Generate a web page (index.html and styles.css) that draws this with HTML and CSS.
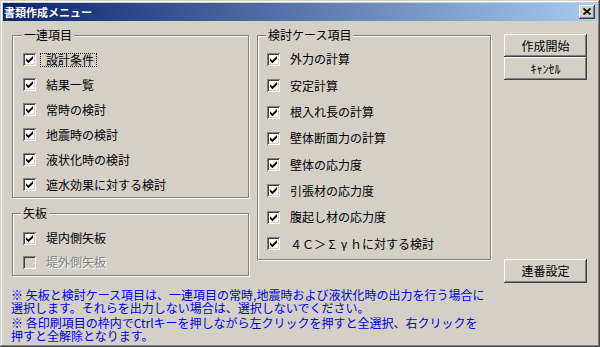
FILE: index.html
```html
<!DOCTYPE html>
<html lang="ja">
<head>
<meta charset="utf-8">
<title>書類作成メニュー</title>
<link rel="stylesheet" href="styles.css">
</head>
<body>
<div class="window">
  <div class="titlebar">
    <span class="title">書類作成メニュー</span>
    <span class="close"><svg width="8" height="7" viewBox="0 0 8 7"><path d="M0.5 0.5L7.5 6.5M7.5 0.5L0.5 6.5" stroke="#000" stroke-width="1.7" fill="none"/></svg></span>
  </div>
  <div class="client">
    <div class="main">
      <div class="col-left">
        <div class="group g1">
          <div class="group-title">一連項目</div>
          <div class="rows">
            <div class="row"><span class="cb"><svg viewBox="0 0 9 9"><path d="M1 3.2L3.4 5.4L8 1L8 3.8L3.4 8.2L1 5.8Z"/></svg></span><span class="lbl focus">設計条件</span></div>
            <div class="row"><span class="cb"><svg viewBox="0 0 9 9"><path d="M1 3.2L3.4 5.4L8 1L8 3.8L3.4 8.2L1 5.8Z"/></svg></span><span class="lbl">結果一覧</span></div>
            <div class="row"><span class="cb"><svg viewBox="0 0 9 9"><path d="M1 3.2L3.4 5.4L8 1L8 3.8L3.4 8.2L1 5.8Z"/></svg></span><span class="lbl">常時の検討</span></div>
            <div class="row"><span class="cb"><svg viewBox="0 0 9 9"><path d="M1 3.2L3.4 5.4L8 1L8 3.8L3.4 8.2L1 5.8Z"/></svg></span><span class="lbl">地震時の検討</span></div>
            <div class="row"><span class="cb"><svg viewBox="0 0 9 9"><path d="M1 3.2L3.4 5.4L8 1L8 3.8L3.4 8.2L1 5.8Z"/></svg></span><span class="lbl">液状化時の検討</span></div>
            <div class="row"><span class="cb"><svg viewBox="0 0 9 9"><path d="M1 3.2L3.4 5.4L8 1L8 3.8L3.4 8.2L1 5.8Z"/></svg></span><span class="lbl">遮水効果に対する検討</span></div>
          </div>
        </div>
        <div class="group g2">
          <div class="group-title">矢板</div>
          <div class="rows">
            <div class="row"><span class="cb"><svg viewBox="0 0 9 9"><path d="M1 3.2L3.4 5.4L8 1L8 3.8L3.4 8.2L1 5.8Z"/></svg></span><span class="lbl">堤内側矢板</span></div>
            <div class="row disabled"><span class="cb"></span><span class="lbl">堤外側矢板</span></div>
          </div>
        </div>
      </div>
      <div class="col-mid">
        <div class="group g3">
          <div class="group-title">検討ケース項目</div>
          <div class="rows">
            <div class="row"><span class="cb"><svg viewBox="0 0 9 9"><path d="M1 3.2L3.4 5.4L8 1L8 3.8L3.4 8.2L1 5.8Z"/></svg></span><span class="lbl">外力の計算</span></div>
            <div class="row"><span class="cb"><svg viewBox="0 0 9 9"><path d="M1 3.2L3.4 5.4L8 1L8 3.8L3.4 8.2L1 5.8Z"/></svg></span><span class="lbl">安定計算</span></div>
            <div class="row"><span class="cb"><svg viewBox="0 0 9 9"><path d="M1 3.2L3.4 5.4L8 1L8 3.8L3.4 8.2L1 5.8Z"/></svg></span><span class="lbl">根入れ長の計算</span></div>
            <div class="row"><span class="cb"><svg viewBox="0 0 9 9"><path d="M1 3.2L3.4 5.4L8 1L8 3.8L3.4 8.2L1 5.8Z"/></svg></span><span class="lbl">壁体断面力の計算</span></div>
            <div class="row"><span class="cb"><svg viewBox="0 0 9 9"><path d="M1 3.2L3.4 5.4L8 1L8 3.8L3.4 8.2L1 5.8Z"/></svg></span><span class="lbl">壁体の応力度</span></div>
            <div class="row"><span class="cb"><svg viewBox="0 0 9 9"><path d="M1 3.2L3.4 5.4L8 1L8 3.8L3.4 8.2L1 5.8Z"/></svg></span><span class="lbl">引張材の応力度</span></div>
            <div class="row"><span class="cb"><svg viewBox="0 0 9 9"><path d="M1 3.2L3.4 5.4L8 1L8 3.8L3.4 8.2L1 5.8Z"/></svg></span><span class="lbl">腹起し材の応力度</span></div>
            <div class="row"><span class="cb"><svg viewBox="0 0 9 9"><path d="M1 3.2L3.4 5.4L8 1L8 3.8L3.4 8.2L1 5.8Z"/></svg></span><span class="lbl"><span class="fw">４</span><span class="fw">Ｃ</span><span class="fw">＞</span><span class="fw">Σ</span><span class="fw">γ</span><span class="fw">ｈ</span>に対する検討</span></div>
          </div>
        </div>
      </div>
      <div class="col-right">
        <div class="btn">作成開始</div>
        <div class="btn">ｷｬﾝｾﾙ</div>
        <div class="btn btn-bottom">連番設定</div>
      </div>
    </div>
    <div class="notes">
      <p>※ 矢板と検討ケース項目は、一連項目の常時,地震時および液状化時の出力を行う場合に<br>選択します。それらを出力しない場合は、選択しないでください。</p>
      <p>※ 各印刷項目の枠内でCtrlキーを押しながら左クリックを押すと全選択、右クリックを<br>押すと全解除となります。</p>
    </div>
  </div>
</div>
</body>
</html>
```

FILE: styles.css
```css
* { box-sizing: border-box; }
html, body { margin: 0; padding: 0; }
body {
  width: 600px;
  height: 347px;
  overflow: hidden;
  background: #D4D0C8;
  font-family: "Noto Sans CJK JP", "Noto Sans", sans-serif;
  font-size: 12px;
  color: #000;
}
.window {
  width: 600px;
  height: 347px;
  padding: 3px;
  background: #D4D0C8;
  box-shadow: inset -1px -1px 0 #404040, inset 1px 1px 0 #D4D0C8,
              inset -2px -2px 0 #808080, inset 2px 2px 0 #FFFFFF;
}
.titlebar {
  height: 18px;
  display: flex;
  align-items: center;
  padding: 0 2px 0 1px;
  background: linear-gradient(to right, #0A246A, #A6CAF0);
}
.title {
  flex: 1;
  color: #fff;
  font-weight: bold;
  font-size: 11px;
  line-height: 18px;
}
.close {
  width: 16px;
  height: 14px;
  display: flex;
  align-items: center;
  justify-content: center;
  background: #D4D0C8;
  box-shadow: inset -1px -1px 0 #404040, inset 1px 1px 0 #FFFFFF,
              inset -2px -2px 0 #808080, inset 2px 2px 0 #D4D0C8;
}
.close svg { display: block; margin: 0 1px 1px 0; }
.client { padding-top: 14px; }
.main {
  display: flex;
  align-items: flex-start;
  height: 248px;
}
.col-left {
  margin-left: 9px;
  width: 237px;
  display: flex;
  flex-direction: column;
}
.col-mid {
  margin-left: 8px;
  width: 234px;
}
.col-right {
  margin-left: 13px;
  margin-top: -1px;
  width: 83px;
  height: 249px;
  display: flex;
  flex-direction: column;
}
.group {
  border: 1px solid #808080;
  box-shadow: inset 1px 1px 0 #FFFFFF, 1px 1px 0 #FFFFFF;
}
.g1 { height: 163px; }
.g2 { margin-top: 15px; height: 63px; }
.g3 { height: 225px; }
.group-title {
  width: fit-content;
  height: 14px;
  line-height: 14px;
  margin: -8px 0 0 9px;
  padding: 0 2px;
  background: #D4D0C8;
}
.g2 .group-title { margin-left: 8px; }
.g3 .group-title { margin-left: 8px; }
.rows { padding-top: 5px; }
.g2 .rows { padding-top: 6px; }
.g2 .row { height: 24px; }
.g3 .rows { padding-top: 4.3px; }
.row {
  height: 25px;
  display: flex;
  align-items: center;
}
.g3 .row { height: 26.3px; }
.cb {
  flex: none;
  margin-left: 10px;
  width: 13px;
  height: 13px;
  padding: 2px;
  background: #FFFFFF;
  box-shadow: inset 1px 1px 0 #808080, inset -1px -1px 0 #FFFFFF,
              inset 2px 2px 0 #404040, inset -2px -2px 0 #D4D0C8;
}
.g3 .cb { margin-left: 9px; }
.cb svg { display: block; width: 9px; height: 9px; fill: #000; }
.lbl {
  margin-left: 4px;
  padding: 0 2px 0 5px;
  height: 14px;
  line-height: 12px;
  border: 1px dotted transparent;
  white-space: nowrap;
}
.lbl.focus { border-color: #000; }
.fw { display: inline-block; width: 12px; text-align: center; }
.disabled .cb { background: #D4D0C8; }
.disabled .lbl { color: #808080; text-shadow: 1px 1px 0 #FFFFFF; }
.btn {
  height: 23px;
  display: flex;
  align-items: center;
  justify-content: center;
  line-height: 14px;
  background: #D4D0C8;
  box-shadow: inset -1px -1px 0 #404040, inset 1px 1px 0 #FFFFFF,
              inset -2px -2px 0 #808080, inset 2px 2px 0 #D4D0C8;
}
.btn-bottom { margin-top: auto; height: 24px; }
.notes {
  margin: 5px 0 0 8px;
  color: #0000E0;
  line-height: 13px;
  white-space: nowrap;
}
.notes p { margin: 0; }
.notes p + p { margin-top: 2px; }
```
